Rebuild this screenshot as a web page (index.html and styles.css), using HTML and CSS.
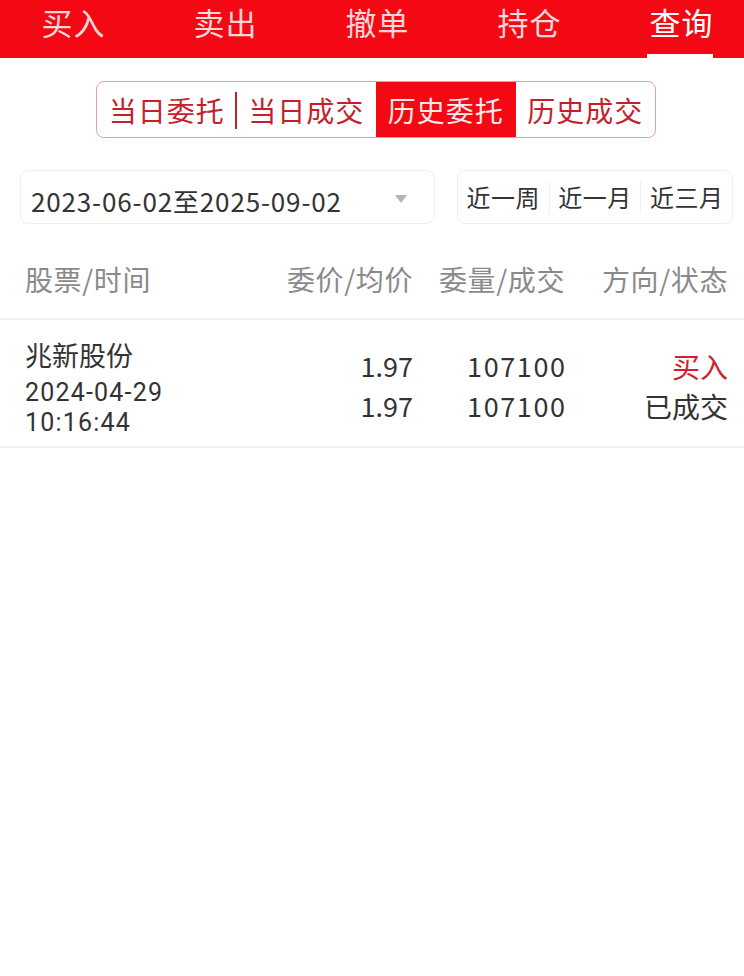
FILE: index.html
```html
<!DOCTYPE html>
<html>
<head>
  <meta charset="UTF-8">
  <title>查询</title>
  <link rel="stylesheet" href="styles.css">
</head>
<body>
  <nav class="top-nav">
    <span class="nav-tab">买入</span>
    <span class="nav-tab">卖出</span>
    <span class="nav-tab">撤单</span>
    <span class="nav-tab">持仓</span>
    <span class="nav-tab active">查询</span>
  </nav>

  <div class="segment">
    <span class="seg-item divider">当日委托</span>
    <span class="seg-item">当日成交</span>
    <span class="seg-item active">历史委托</span>
    <span class="seg-item">历史成交</span>
  </div>

  <div class="filter-row">
    <div class="date-box">
      <span class="date-text">2023-06-02至2025-09-02</span>
      <span class="caret"></span>
    </div>
    <div class="range-box">
      <span class="range-item">近一周</span>
      <span class="range-item">近一月</span>
      <span class="range-item">近三月</span>
    </div>
  </div>

  <div class="table-head">
    <span class="col-name">股票/时间</span>
    <span class="col-num">委价/均价</span>
    <span class="col-num">委量/成交</span>
    <span class="col-num">方向/状态</span>
  </div>

  <div class="table-row">
    <div class="col-name">
      <div class="stock-name">兆新股份</div>
      <div class="stock-time">2024-04-29</div>
      <div class="stock-time">10:16:44</div>
    </div>
    <div class="col-num cell-pair">
      <span>1.97</span>
      <span>1.97</span>
    </div>
    <div class="col-num cell-pair wide">
      <span>107100</span>
      <span>107100</span>
    </div>
    <div class="col-num cell-pair status">
      <span class="buy">买入</span>
      <span>已成交</span>
    </div>
  </div>
</body>
</html>
```

FILE: styles.css
```css
body {
  margin: 0;
  font-family: "Noto Sans CJK SC", "Noto Sans", sans-serif;
  background-color: #fff;
  color: #333;
}

.top-nav {
  display: flex;
  gap: 87px;
  height: 58px;
  padding-left: 41px;
  background-color: #f40814;
}

.nav-tab {
  position: relative;
  width: 65px;
  font-size: 31px;
  line-height: 44px;
  color: #fbd6d8;
  text-align: center;
  letter-spacing: 1px;
}

.nav-tab.active {
  color: #fff;
}

.nav-tab.active::after {
  content: "";
  position: absolute;
  left: -2px;
  right: 1px;
  bottom: 0;
  height: 4px;
  background-color: #fff;
}

.segment {
  display: flex;
  width: 558px;
  height: 55px;
  margin: 23px 0 0 96px;
  border: 1px solid #dba3a7;
  border-radius: 8px;
  overflow: hidden;
}

.seg-item {
  position: relative;
  flex: 1;
  display: flex;
  align-items: center;
  justify-content: center;
  font-size: 28px;
  letter-spacing: 1px;
  color: #c41f2b;
}

.seg-item.divider::after {
  content: "";
  position: absolute;
  right: 0;
  top: 10px;
  bottom: 8px;
  width: 2px;
  background-color: #c41f2b;
}

.seg-item.active {
  background-color: #f40814;
  color: #fde8e9;
}

.filter-row {
  display: flex;
  justify-content: space-between;
  margin: 32px 11px 0 20px;
}

.date-box {
  display: flex;
  align-items: center;
  justify-content: space-between;
  width: 415px;
  height: 54px;
  padding: 0 27px 0 10px;
  box-sizing: border-box;
  border: 1px solid #efefef;
  border-radius: 8px;
}

.date-text {
  font-size: 26px;
  color: #333;
  letter-spacing: 0.85px;
  padding-top: 6px;
}

.caret {
  width: 0;
  height: 0;
  border-left: 6px solid transparent;
  border-right: 6px solid transparent;
  border-top: 8px solid #b5b5b5;
  margin-top: 4px;
}

.range-box {
  display: flex;
  align-items: center;
  width: 276px;
  height: 54px;
  box-sizing: border-box;
  border: 1px solid #efefef;
  border-radius: 8px;
}

.range-item {
  flex: 1;
  text-align: center;
  font-size: 24px;
  line-height: 34px;
  letter-spacing: 0.5px;
  color: #333;
  border-left: 1px solid #f0f0f0;
}

.range-item:first-child {
  border-left: none;
}

.table-head,
.table-row {
  display: grid;
  grid-template-columns: 1fr 140px 152px 163px;
  padding: 0 16px 0 25px;
}

.table-head {
  align-items: center;
  height: 96px;
  padding-top: 16px;
  box-sizing: border-box;
  font-size: 28px;
  letter-spacing: 0.6px;
  color: #8a8a8a;
  border-bottom: 2px solid #f2f2f2;
}

.table-head .col-num,
.table-row .col-num {
  text-align: right;
}

.table-row {
  height: 126px;
  border-bottom: 2px solid #f2f2f2;
}

.stock-name {
  margin-top: 17px;
  margin-bottom: 5px;
  font-size: 27px;
  line-height: 36px;
  color: #333;
}

.stock-time {
  font-family: Roboto, "Noto Sans", sans-serif;
  font-size: 25px;
  line-height: 30px;
  letter-spacing: 1.2px;
  color: #333;
}

.cell-pair {
  display: flex;
  flex-direction: column;
  align-items: flex-end;
  padding-top: 26px;
  font-size: 27px;
  line-height: 40px;
  color: #333;
}

.cell-pair.wide span {
  letter-spacing: 1.6px;
  margin-right: -1.6px;
}

.cell-pair.status {
  font-size: 28px;
}

.buy {
  color: #d0222e;
}
```
